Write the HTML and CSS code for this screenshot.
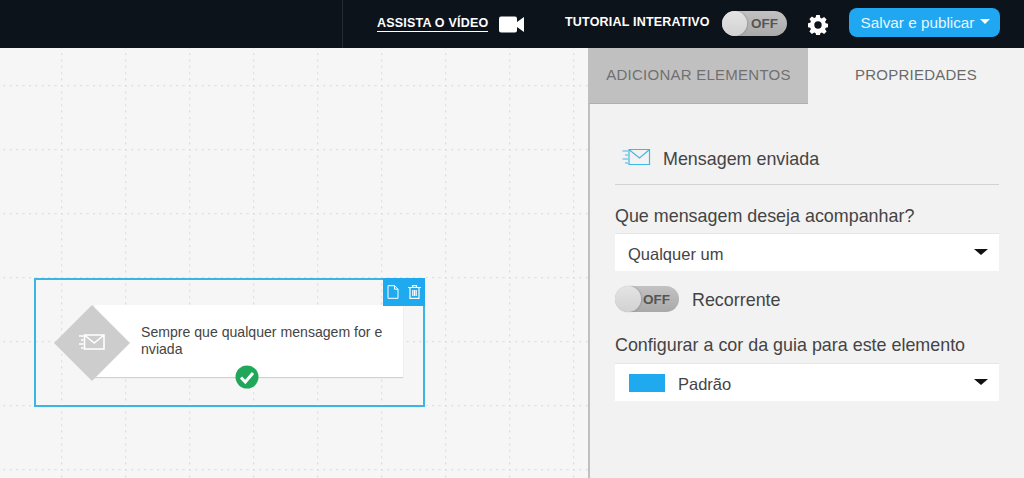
FILE: index.html
```html
<!DOCTYPE html>
<html lang="pt">
<head>
<meta charset="utf-8">
<title>Mensagem enviada</title>
<link rel="stylesheet" href="styles.css">
</head>
<body>
<header class="topbar">
  <div class="watch">
    <a class="watch-link">ASSISTA O VÍDEO</a>
    <svg class="cam" width="26" height="17" viewBox="0 0 26 17"><rect x="0" y="0.5" width="18" height="16" rx="2" fill="#fff"/><path d="M18 6 25 1V16L18 11Z" fill="#fff"/></svg>
  </div>
  <span class="tutorial">TUTORIAL INTERATIVO</span>
  <div class="toggle toggle-top"><span class="knob"></span><span class="off">OFF</span></div>
  <svg class="gear" width="20" height="20" viewBox="0 0 20 20"><path fill="#fff" fill-rule="evenodd" d="M8.200 0h3.600l.5 2.700 1.500.7 2.300-1.500 2.500 2.500-1.500 2.300.6 1.500 2.700.6v3.400l-2.700.6-.6 1.500 1.500 2.300-2.500 2.500-2.300-1.500-1.500.6-.5 2.800H8.200l-.5-2.800-1.500-.6-2.300 1.500-2.500-2.500 1.500-2.300-.6-1.500-2.700-.6V8.300l2.700-.6.600-1.500-1.500-2.300 2.500-2.500 2.300 1.500 1.500-.7ZM10 6.300a3.700 3.700 0 1 0 0 7.400 3.700 3.700 0 0 0 0-7.400Z"/></svg>
  <button class="publish">Salvar e publicar<span class="caret caret-white"></span></button>
</header>
<main class="workspace">
  <section class="canvas">
    <svg class="grid" width="588" height="430">
      <defs>
        <pattern id="cell" x="-3" y="37" width="64" height="64" patternUnits="userSpaceOnUse">
          <path d="M0 0.500H64" stroke="#dedede" stroke-width="1.500" stroke-dasharray="2 4.400" fill="none"/>
          <path d="M0.500 0V64" stroke="#dedede" stroke-width="1.500" stroke-dasharray="2 4.400" fill="none"/>
        </pattern>
      </defs>
      <rect width="588" height="430" fill="url(#cell)"/>
    </svg>
    <div class="node">
      <div class="node-tools">
        <svg width="12" height="14" viewBox="0 0 12 14"><path d="M1 .700H7.500L11 4.200V13.300H1ZM7.500 .700V4.200H11" fill="none" stroke="#fff" stroke-width="1"/></svg>
        <svg width="13" height="14" viewBox="0 0 13 14"><path d="M0 2.500H13M4.500 2.500V.6H8.500V2.500M2 2.500V13.400H11V2.500M4.800 5V11M6.500 5V11M8.200 5V11" fill="none" stroke="#fff" stroke-width="1.200"/></svg>
      </div>
      <div class="node-card">
        <p class="node-text">Sempre que qualquer mensagem for e<br>nviada</p>
      </div>
      <div class="diamond">
        <svg class="diamond-icon" width="26" height="16" viewBox="0 0 26 16"><path d="M5.500 1H25V15H5.500ZM6 1.500 15.200 9 24.500 1.500" fill="none" stroke="#fff" stroke-width="1.600"/><path d="M0 2H4.500M2 6H4.500M0 10H4.500M2 14H4.500" stroke="#fff" stroke-width="1.600"/></svg>
      </div>
      <svg class="check" width="24" height="24" viewBox="0 0 24 24"><circle cx="12" cy="12" r="11.500" fill="#20a85a"/><path d="M6 12.500 10.300 17 18 8" fill="none" stroke="#fff" stroke-width="3"/></svg>
    </div>
  </section>
  <aside class="panel">
    <nav class="tabs">
      <div class="tab tab-active">ADICIONAR ELEMENTOS</div>
      <div class="tab">PROPRIEDADES</div>
    </nav>
    <div class="panel-body">
      <div class="panel-title">
        <svg width="29" height="18" viewBox="0 0 29 18"><path d="M7 1.500H27.500V16.500H7ZM7.500 2 17.500 10 27 2" fill="none" stroke="#3fb8e2" stroke-width="1.200"/><path d="M0.500 3H6M3 7H6M0.500 11H6M3 15H6" stroke="#3fb8e2" stroke-width="1.200"/></svg>
        <span class="panel-title-text">Mensagem enviada</span>
      </div>
      <label class="field-label label-first">Que mensagem deseja acompanhar?</label>
      <div class="select"><span>Qualquer um</span><span class="caret caret-black"></span></div>
      <div class="recurring">
        <div class="toggle toggle-panel"><span class="knob"></span><span class="off">OFF</span></div>
        <span class="recurring-text">Recorrente</span>
      </div>
      <label class="field-label label-second">Configurar a cor da guia para este elemento</label>
      <div class="select select-color"><span class="swatch"></span><span class="color-name">Padrão</span><span class="caret caret-black"></span></div>
    </div>
  </aside>
</main>
</body>
</html>
```
FILE: styles.css
```css
* { box-sizing: border-box; }
html, body { margin: 0; height: 478px; overflow: hidden; }
body { font-family: "Liberation Sans", Arial, sans-serif; color: #444; background: #f6f6f6; display: flex; flex-direction: column; }

.topbar { height: 48px; flex: none; background: #0d131b; color: #fff; display: flex; align-items: center; }
.watch { margin-left: 342px; width: 196px; height: 48px; border-left: 1px solid #262b33; display: flex; align-items: center; padding-left: 34px; }
.watch-link { font-size: 12.500px; font-weight: bold; letter-spacing: .2px; line-height: 14px; border-bottom: 1.500px solid #fff; padding-bottom: 1px; white-space: nowrap; }
.cam { margin-left: 11px; flex: none; }
.tutorial { margin-left: 27px; font-size: 12.500px; font-weight: bold; letter-spacing: .2px; white-space: nowrap; margin-top: -5px; width: 157px; flex: none; }
.toggle { position: relative; width: 65px; height: 25px; border-radius: 13px; background: linear-gradient(#c2c2c2, #a9a9a9); display: flex; align-items: center; justify-content: flex-end; flex: none; }
.knob { position: absolute; left: 0; top: 0; width: 25px; height: 25px; border-radius: 50%; background: linear-gradient(#e4e4e4, #d2d2d2); box-shadow: 1px 0 2px rgba(0,0,0,.15); }
.off { font-size: 13.500px; font-weight: bold; color: #555; padding-right: 9px; }
.toggle-top { margin-top: -2px; }
.gear { margin-left: 21px; flex: none; margin-top: 2px; }
.publish { margin-left: 21px; width: 151px; height: 29px; border: 0; border-radius: 8px; background: #1fa7f2; color: #e8f6ff; font: 15.300px "Liberation Sans", Arial, sans-serif; padding: 0 0 0 2px; display: flex; align-items: center; justify-content: center; gap: 6px; flex: none; margin-top: -3px; }

.caret { display: inline-block; width: 0; height: 0; border-left: 5px solid transparent; border-right: 5px solid transparent; }
.caret-white { border-top: 5px solid #fff; margin-top: -2px; }
.caret-black { border-left-width: 7px; border-right-width: 7px; border-top: 6px solid #111; margin-left: auto; margin-top: -6px; }

.workspace { flex: 1; display: flex; min-height: 0; }
.canvas { position: relative; width: 588px; flex: none; background: #f6f6f6; overflow: hidden; }
.grid { position: absolute; left: 0; top: 0; }
.node { position: absolute; left: 34px; top: 230px; width: 391px; height: 129px; border: 2px solid #3ab5e6; }
.node-tools { position: absolute; right: -2px; top: -2px; width: 42px; height: 28px; background: #1fa9ee; display: flex; align-items: center; justify-content: center; gap: 9px; z-index: 2; }
.node-card { position: absolute; left: 59px; top: 25px; width: 308px; height: 72px; background: #fff; box-shadow: 0 1px 1px rgba(0,0,0,.15); padding: 19px 0 0 45px; }
.node-text { margin: 0 0 0 1px; font-size: 14.100px; line-height: 17px; color: #444; white-space: nowrap; }
.diamond { position: absolute; left: 18px; top: 25px; width: 76px; height: 76px; background: #cdcdcd; clip-path: polygon(50% 0, 100% 50%, 50% 100%, 0 50%); display: flex; align-items: center; justify-content: center; }
.diamond-icon { margin-top: -3px; }
.check { position: absolute; left: 199px; top: 85px; }

.panel { flex: 1; display: flex; flex-direction: column; background: #f2f2f2; border-left: 2px solid #c0c0c0; }
.tabs { display: flex; height: 56px; flex: none; }
.tab { display: flex; align-items: center; justify-content: center; font-size: 15px; letter-spacing: .25px; color: #6a6a6a; padding-bottom: 3px; }
.tab-active { width: 219px; flex: none; background: #c0c0c0; box-shadow: inset 0 -1px 0 #b0b0b0; color: #707070; margin-left: -1px; }
.tab + .tab { flex: 1; }
.panel-body { padding: 0 25px; flex: 1; }
.panel-title { box-sizing: content-box; height: 24px; display: flex; align-items: center; gap: 12px; font-size: 17.900px; margin-top: 44px; padding: 0 0 12px 7px; border-bottom: 1px solid #d2d2d2; }
.panel-title svg { flex: none; margin-top: -6px; }
.panel-title-text { margin-top: -2px; }
.field-label { display: block; font-size: 17.900px; line-height: 20px; color: #444; }
.label-first { margin-top: 21px; }
.label-second { margin-top: 23px; }
.select { margin-top: 7px; height: 38px; background: #fff; border-top: 1px solid #e6e6e6; display: flex; align-items: center; padding: 4px 11px 0 13px; font-size: 16.500px; color: #444; }
.select-color { padding-left: 14px; margin-top: 8px; }
.recurring { margin-top: 15px; display: flex; align-items: center; gap: 13px; font-size: 17.900px; height: 26px; }
.recurring-text { margin-top: 2px; }
.toggle-panel { width: 64px; height: 26px; }
.toggle-panel .knob { width: 26px; height: 26px; }
.swatch { width: 36px; height: 18px; background: #1fa9ee; flex: none; margin-top: -4px; }
.color-name { margin-left: 13px; }
```
